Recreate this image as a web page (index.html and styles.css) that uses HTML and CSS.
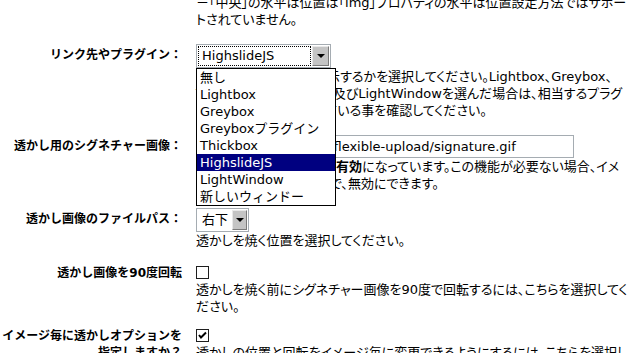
FILE: index.html
```html
<!DOCTYPE html>
<html lang="ja">
<head>
  <meta charset="UTF-8">
  <title>透かし設定</title>
  <link rel="stylesheet" href="styles.css">
</head>
<body>
  <div class="settings">
    <div class="row">
      <div class="row-label"></div>
      <div class="row-desc">－「中央」の水平は位置は「img」プロパティの水平は位置設定方法ではサポートされていません。</div>
    </div>

    <div class="row">
      <label class="row-label pad-select">リンク先やプラグイン：</label>
      <div class="row-field">
        <div class="select wide focused">
          <span class="select-value">HighslideJS</span>
          <span class="select-arrow"></span>
          <ul class="dropdown">
            <li>無し</li>
            <li>Lightbox</li>
            <li>Greybox</li>
            <li>Greyboxプラグイン</li>
            <li>Thickbox</li>
            <li class="selected">HighslideJS</li>
            <li>LightWindow</li>
            <li>新しいウィンドー</li>
          </ul>
        </div>
      </div>
      <div class="row-desc">リンク先をどのように表示するかを選択してください。Lightbox、Greybox、Thickbox、HighslideJS及びLightWindowを選んだ場合は、相当するプラグインがインストールされている事を確認してください。</div>
    </div>

    <div class="row">
      <label class="row-label pad-input">透かし用のシグネチャー画像：</label>
      <div class="row-field">
        <input class="text-input" type="text" value="/wp-content/plugins/flexible-upload/signature.gif">
      </div>
      <div class="row-desc">画像の透かし機能は現在<strong>有効</strong>になっています。この機能が必要ない場合、イメージ設定のオプション欄で、無効にできます。</div>
    </div>

    <div class="row">
      <label class="row-label pad-select">透かし画像のファイルパス：</label>
      <div class="row-field">
        <div class="select small">
          <span class="select-value">右下</span>
          <span class="select-arrow"></span>
        </div>
      </div>
      <div class="row-desc">透かしを焼く位置を選択してください。</div>
    </div>

    <div class="row">
      <label class="row-label">透かし画像を90度回転</label>
      <div class="row-field check-line">
        <span class="check"></span>
      </div>
      <div class="row-desc">透かしを焼く前にシグネチャー画像を90度で回転するには、こちらを選択してください。</div>
    </div>

    <div class="row row-last">
      <label class="row-label">イメージ毎に透かしオプションを指定しますか？</label>
      <div class="row-field check-line">
        <span class="check checked">
          <svg width="11" height="11" viewBox="0 0 11 11"><path d="M2 5 L4 7.5 L9 2.5" fill="none" stroke="#000" stroke-width="2"/></svg>
        </span>
      </div>
      <div class="row-desc">透かしの位置と回転をイメージ毎に変更できるようにするには、こちらを選択してください。</div>
    </div>
  </div>
</body>
</html>
```

FILE: styles.css
```css
html, body {
  overflow: hidden;
}

body {
  margin: 0;
  background: #fff;
  color: #000;
  font-family: "DejaVu Sans", "Noto Sans CJK JP", sans-serif;
  font-size: 13px;
}

/* page is scrolled a little, so the table starts off-screen */
.settings {
  margin: -14px 0 0 -4px;
  padding-right: 4px;
}

.row {
  display: grid;
  grid-template-columns: 186px 1fr;
  column-gap: 14px;
  padding: 8px 0;
}

.row-last {
  padding-top: 5px;
}

.row-label {
  grid-row: 1 / span 2;
  text-align: right;
  font-weight: bold;
  font-size: 12px;
  line-height: 17px;
}

.pad-select {
  padding-top: 3px;
}

.pad-input {
  padding-top: 3px;
}

.row-field {
  grid-column: 2;
}

.row-desc {
  grid-column: 2;
  line-height: 17px;
  font-feature-settings: "palt";
}

/* classic windows style select */
.select {
  position: relative;
  display: flex;
  align-items: center;
  box-sizing: border-box;
  height: 24px;
  padding: 1px;
  border: 1px solid #a5acb2;
  background: #fff;
}

.select.wide {
  width: 135px;
}

.select.small {
  width: 53px;
}

.select-value {
  flex: 1;
  height: 18px;
  line-height: 18px;
  padding: 0 4px;
  white-space: nowrap;
}

.focused .select-value {
  margin: 0 2px 0 1px;
  padding-left: 3px;
  outline: 1px dotted #000;
}

.select-arrow {
  display: flex;
  align-items: center;
  justify-content: center;
  box-sizing: border-box;
  width: 17px;
  height: 20px;
  background: #c4c4c4;
  border: 1px solid;
  border-color: #e8e8e8 #7a7a7a #7a7a7a #e8e8e8;
}

.select-arrow::after {
  content: "";
  border-left: 4px solid transparent;
  border-right: 4px solid transparent;
  border-top: 4px solid #000;
}

.dropdown {
  position: absolute;
  top: 100%;
  left: -1px;
  z-index: 2;
  box-sizing: border-box;
  width: 140px;
  margin: 1px 0 0;
  padding: 0;
  list-style: none;
  background: #fff;
  border: 1px solid #000;
}

.dropdown li {
  height: 17px;
  line-height: 17px;
  padding-left: 3px;
  white-space: nowrap;
}

.dropdown li.selected {
  background: #000080;
  color: #fff;
}

.text-input {
  display: block;
  box-sizing: border-box;
  width: 378px;
  height: 23px;
  margin: 0;
  padding: 0 3px;
  border: 1px solid #a5acb2;
  font: inherit;
  color: #000;
}

.check-line {
  height: 16px;
}

.check {
  display: block;
  box-sizing: border-box;
  width: 13px;
  height: 13px;
  margin-top: 1px;
  border: 1px solid #1e1e1e;
  background: #fff;
}

.check svg {
  display: block;
}
```
